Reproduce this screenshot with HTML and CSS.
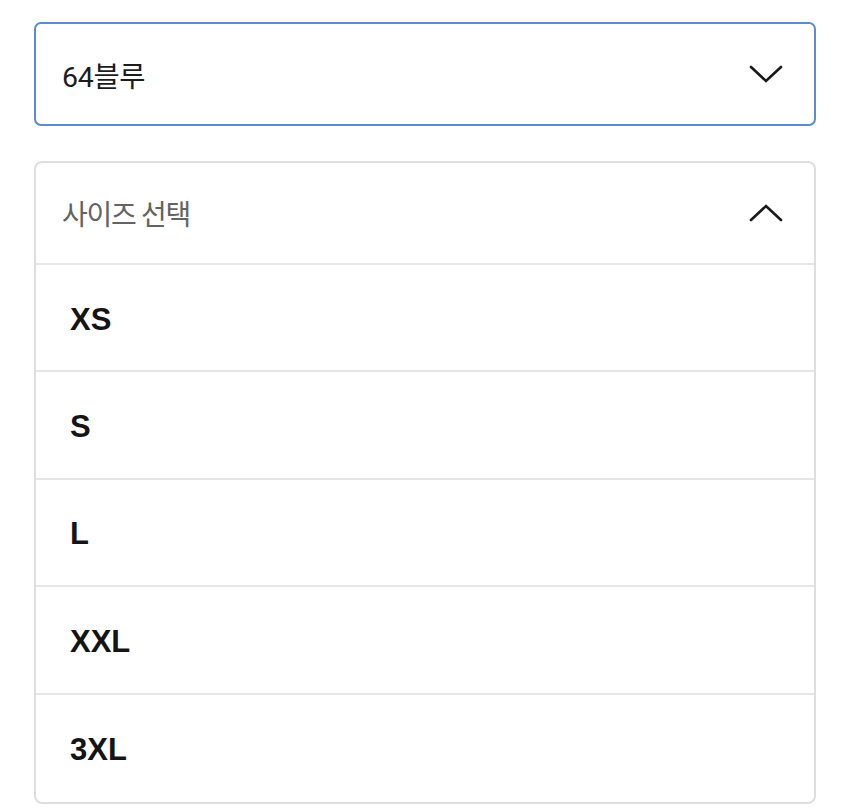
FILE: index.html
```html
<!DOCTYPE html>
<html lang="ko">
<head>
<meta charset="utf-8">
<title>옵션 선택</title>
<link rel="stylesheet" href="styles.css">
</head>
<body>
<div class="page">
  <div class="select select--active">
    <span class="select__value">64블루</span>
    <svg class="chevron" width="34" height="18" viewBox="0 0 34 18" aria-hidden="true">
      <path d="M2 2 L17 16 L32 2" fill="none" stroke="#1a1a1a" stroke-width="2.6" stroke-linecap="round" stroke-linejoin="miter"/>
    </svg>
  </div>

  <div class="dropdown">
    <div class="dropdown__head">
      <span class="dropdown__placeholder">사이즈 선택</span>
      <svg class="chevron" width="34" height="18" viewBox="0 0 34 18" aria-hidden="true">
        <path d="M2 16 L17 2 L32 16" fill="none" stroke="#1a1a1a" stroke-width="2.6" stroke-linecap="round" stroke-linejoin="miter"/>
      </svg>
    </div>
    <ul class="dropdown__list">
      <li class="dropdown__item">XS</li>
      <li class="dropdown__item">S</li>
      <li class="dropdown__item">L</li>
      <li class="dropdown__item">XXL</li>
      <li class="dropdown__item">3XL</li>
    </ul>
  </div>
</div>
</body>
</html>
```

FILE: styles.css
```css
html, body {
  margin: 0;
  padding: 0;
  background: #ffffff;
}

body {
  font-family: Roboto, "Noto Sans CJK KR", "Noto Sans", sans-serif;
  color: #1a1a1a;
}

.page {
  padding: 22px 34px 0 34px;
  display: flex;
  flex-direction: column;
  gap: 35px;
}

.select {
  box-sizing: border-box;
  height: 104px;
  border: 2px solid #5b8bd1;
  border-radius: 7px;
  display: flex;
  align-items: center;
  justify-content: space-between;
  padding: 0 31px 0 26px;
}

.select__value {
  font-size: 28.5px;
  letter-spacing: -0.3px;
  color: #1c1c1c;
}

.chevron {
  display: block;
  flex: none;
}

.dropdown {
  box-sizing: border-box;
  border: 2px solid #dedede;
  border-radius: 8px;
  overflow: hidden;
}

.dropdown__head {
  box-sizing: border-box;
  height: 102px;
  display: flex;
  align-items: center;
  justify-content: space-between;
  padding: 0 31px 0 26px;
  border-bottom: 2px solid #e6e6e6;
}

.dropdown__placeholder {
  font-size: 28px;
  letter-spacing: -1.3px;
  color: #636363;
}

.dropdown__list {
  list-style: none;
  margin: 0;
  padding: 0;
}

.dropdown__item {
  box-sizing: border-box;
  height: 107.4px;
  display: flex;
  align-items: center;
  padding: 4px 0 0 34px;
  font-family: "Liberation Sans", Arial, sans-serif;
  font-size: 31px;
  font-weight: 700;
  color: #141414;
  border-bottom: 2px solid #e6e6e6;
}

.dropdown__item:last-child {
  border-bottom: none;
}
```
